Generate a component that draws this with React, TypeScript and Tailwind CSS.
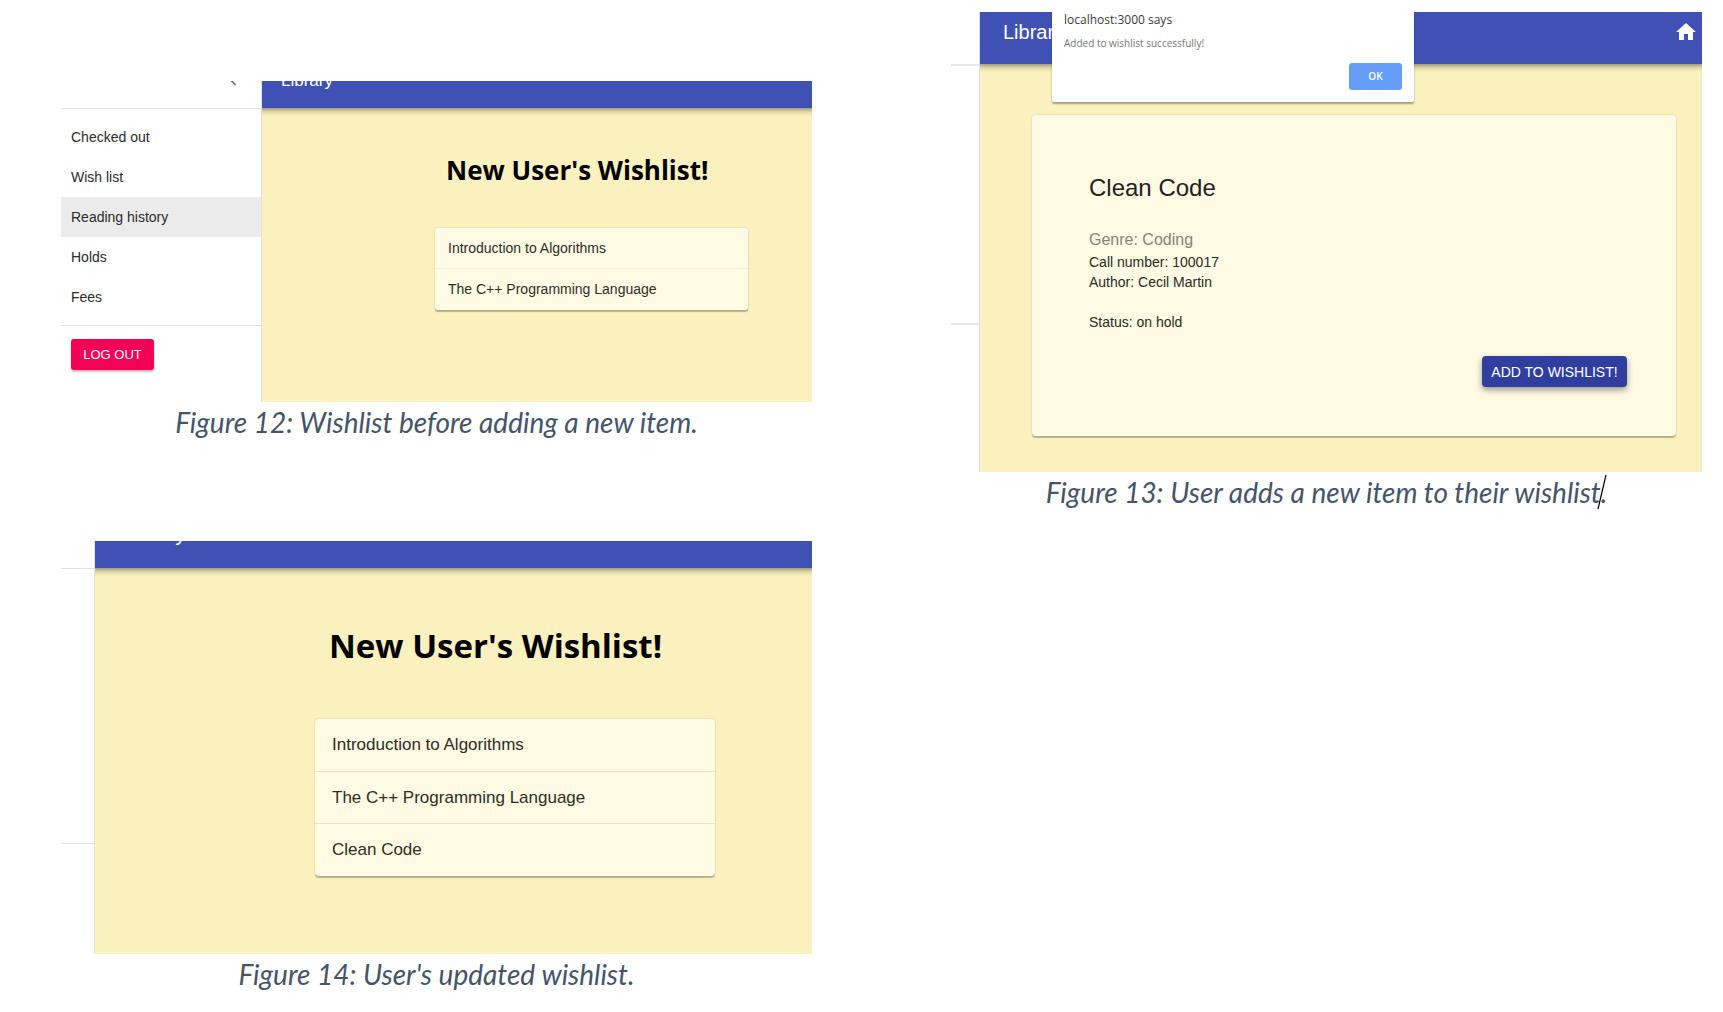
import type { ReactNode } from "react";

const ARIAL = "font-['Liberation_Sans',Arial,sans-serif]";

const menuItems = ["Checked out", "Wish list", "Reading history", "Holds", "Fees"];

function Caption({ children }: { children: ReactNode }) {
  return (
    <figcaption className="text-center font-['Lato',Carlito,sans-serif] text-[28px] leading-10 text-[#44546a] italic">
      {children}
    </figcaption>
  );
}

function ChevronLeft() {
  return (
    <svg viewBox="0 0 24 24" className="size-[22px] fill-[#757575]" aria-hidden="true">
      <path d="M15.41 7.41 14 6l-6 6 6 6 1.41-1.41L10.83 12z" />
    </svg>
  );
}

function HomeIcon() {
  return (
    <svg viewBox="0 0 24 24" className="size-6 fill-white" aria-hidden="true">
      <path d="M10 20v-6h4v6h5v-8h3L12 3 2 12h3v8z" />
    </svg>
  );
}

function Sidebar() {
  return (
    <nav className="flex w-[201px] shrink-0 flex-col border-r border-[#e0e0e0] bg-white">
      <div className="flex h-7 items-end overflow-hidden border-b border-[#e0e0e0]">
        <div className="flex h-14 w-full shrink-0 items-center justify-end pr-[17px]">
          <button type="button" aria-label="Close menu">
            <ChevronLeft />
          </button>
        </div>
      </div>
      <ul className="border-b border-[#e0e0e0] py-2">
        {menuItems.map((item) => (
          <li key={item}>
            <a
              href="#"
              className={
                item === "Reading history"
                  ? "block bg-[#ebebeb] px-[10px] text-sm leading-10 text-[#2b2b2b]"
                  : "block px-[10px] text-sm leading-10 text-[#2b2b2b]"
              }
            >
              {item}
            </a>
          </li>
        ))}
      </ul>
      <div className="px-[10px] pt-[13px]">
        <button
          type="button"
          className="h-[31px] w-[83px] rounded-[3px] bg-[#f50057] text-[13px] text-white shadow-[0_2px_2px_rgba(0,0,0,0.25)]"
        >
          LOG OUT
        </button>
      </div>
    </nav>
  );
}

function FigureBefore() {
  return (
    <figure>
      <div className="flex h-[321px] overflow-hidden">
        <Sidebar />
        <div className="flex-1 overflow-hidden bg-[#fbf1be]">
          <header className="flex h-[27px] items-end overflow-hidden bg-[#3f51b5]">
            <div className="flex h-[54px] shrink-0 items-center px-[19px] text-[17px] text-white">Library</div>
          </header>
          <div className="h-2 bg-linear-to-b from-black/35 via-black/10 to-transparent" />
          <main className="pr-[64px] pl-[173px]">
            <h1 className="mt-9 ml-[11px] font-['Open_Sans','Segoe_UI',sans-serif] text-[26px] leading-9 font-bold whitespace-nowrap text-black">
              New User's Wishlist!
            </h1>
            <ul className="mt-10 rounded-[3px] bg-[#fffae3] text-sm text-[#2e2e26] shadow-[0_2px_1px_rgba(0,0,0,0.25),0_0_2px_rgba(0,0,0,0.15)]">
              <li className="border-b border-[#f7efd4] px-[13px] leading-10">Introduction to Algorithms</li>
              <li className="px-[13px] leading-[41px]">The C++ Programming Language</li>
            </ul>
          </main>
        </div>
      </div>
      <Caption>Figure 12: Wishlist before adding a new item.</Caption>
    </figure>
  );
}

function FigureUpdated() {
  return (
    <figure className="mt-[99px]">
      <div className="flex h-[413px] overflow-hidden">
        <div className="w-[34px] shrink-0 border-r border-[#e0e0e0]">
          <div className="h-7 border-b border-[#e0e0e0]" />
          <div className="h-[275px] border-b border-[#e0e0e0]" />
        </div>
        <div className="flex-1 overflow-hidden bg-[#fbf1be]">
          <header className="flex h-[27px] items-end overflow-hidden bg-[#3f51b5]">
            <div className="flex h-[72px] shrink-0 items-center px-6 text-[22px] text-white">Library</div>
          </header>
          <div className="h-2 bg-linear-to-b from-black/35 via-black/10 to-transparent" />
          <main className="pr-[97px] pl-[220px]">
            <h1 className="mt-12 ml-[14px] font-['Open_Sans','Segoe_UI',sans-serif] text-[33px] leading-[44px] font-bold whitespace-nowrap text-black">
              New User's Wishlist!
            </h1>
            <ul className="mt-[51px] rounded-[4px] bg-[#fffae3] text-[17px] text-[#2e2e26] shadow-[0_2px_1px_rgba(0,0,0,0.25),0_0_2px_rgba(0,0,0,0.15)]">
              <li className="border-b border-[#e6e1cc] px-[17px] leading-[52px]">Introduction to Algorithms</li>
              <li className="border-b border-[#e6e1cc] px-[17px] leading-[51px]">The C++ Programming Language</li>
              <li className="px-[17px] leading-[52px]">Clean Code</li>
            </ul>
          </main>
        </div>
      </div>
      <Caption>Figure 14: User's updated wishlist.</Caption>
    </figure>
  );
}

function FigureAdding() {
  return (
    <figure>
      <div className="relative flex h-[460px] overflow-hidden">
        <div className="w-[29px] shrink-0 border-r border-[#e0e0e0]">
          <div className="h-[54px] border-b-2 border-[#e8e8e8]" />
          <div className="h-[259px] border-b-2 border-[#e8e8e8]" />
        </div>
        <div className="flex-1 overflow-hidden bg-[#fbf1be]">
          <header className="flex h-[52px] items-end overflow-hidden bg-[#3f51b5]">
            <div className="flex h-16 flex-1 shrink-0 items-center justify-between pr-1 pl-[23px] text-xl text-white">
              <span>Library</span>
              <button type="button" aria-label="Home">
                <HomeIcon />
              </button>
            </div>
          </header>
          <div className="h-2 bg-linear-to-b from-black/35 via-black/10 to-transparent" />
          <main className="pt-[43px] pr-[26px] pl-[52px]">
            <article className="flex h-[321px] flex-col rounded-[4px] bg-[#fffae3] px-[57px] pt-[57px] text-sm leading-5 text-[#2b2b24] shadow-[0_2px_1px_rgba(0,0,0,0.25),0_0_2px_rgba(0,0,0,0.15)]">
              <h2 className="text-2xl leading-8 text-[#22221e]">Clean Code</h2>
              <p className="mt-6 text-base leading-6 text-[#86847a]">Genre: Coding</p>
              <p>Call number: 100017</p>
              <p>Author: Cecil Martin</p>
              <p className="mt-5">Status: on hold</p>
              <button
                type="button"
                className="mt-6 -mr-2 h-[31px] w-[145px] self-end rounded-[4px] bg-[#303f9f] text-sm whitespace-nowrap text-white shadow-[0_3px_6px_rgba(0,0,0,0.4)]"
              >
                ADD TO WISHLIST!
              </button>
            </article>
          </main>
        </div>
        <div
          role="dialog"
          aria-label="localhost:3000 says"
          className="absolute top-0 left-[101px] flex h-[90px] w-[362px] flex-col rounded-b-[2px] bg-white px-3 font-['Open_Sans','Segoe_UI',sans-serif] text-[10px] shadow-[0_2px_2px_rgba(0,0,0,0.35)]"
        >
          <p className="text-xs leading-4 text-[#3c3c3c]">localhost:3000 says</p>
          <p className="mt-[7px] leading-4 text-[#777777]">Added to wishlist successfully!</p>
          <button
            type="button"
            className="mt-3 h-[27px] w-[53px] self-end rounded-[3px] bg-[#669df6] font-semibold text-white"
          >
            OK
          </button>
        </div>
      </div>
      <Caption>
        Figure 13: User adds a new item to their wishlist
        <span className="relative">
          .
          <svg viewBox="0 0 10 36" className="absolute -top-px -left-1 h-9 w-[10px]" aria-hidden="true">
            <path d="M9 1 1 35" stroke="#000" strokeWidth="1.2" />
          </svg>
        </span>
      </Caption>
    </figure>
  );
}

export default function App() {
  return (
    <div
      className={`${ARIAL} grid min-h-screen grid-cols-2 items-start gap-x-[139px] bg-white pr-[21px] pl-[61px]`}
    >
      <section className="pt-[81px]">
        <FigureBefore />
        <FigureUpdated />
      </section>
      <section className="pt-3">
        <FigureAdding />
      </section>
    </div>
  );
}
